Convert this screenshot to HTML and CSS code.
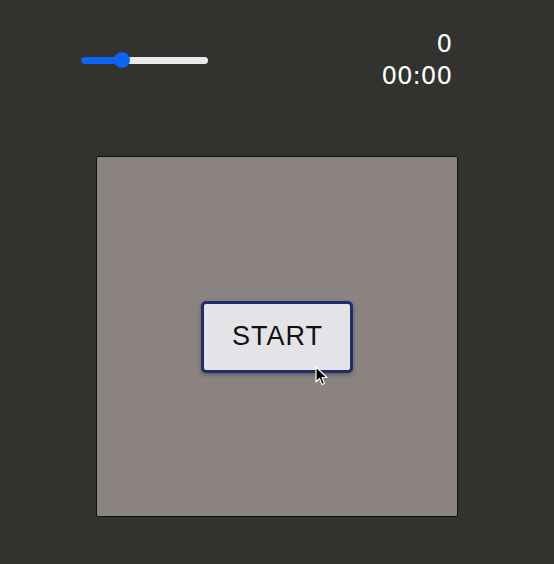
FILE: index.html
```html
<!DOCTYPE html>
<html>
<head>
<meta charset="utf-8">
<link rel="stylesheet" href="styles.css">
</head>
<body>
<div class="page">
  <header class="top">
    <div class="slider">
      <div class="fill"></div>
      <div class="thumb"></div>
      <div class="rest"></div>
    </div>
    <div class="stats">
      <div class="score">0</div>
      <div class="time">00:00</div>
    </div>
  </header>
  <main class="board">
    <button class="start">START</button>
    <svg class="cursor" width="13" height="20" viewBox="0 0 13 20">
      <path d="M1 1 L1 16 L4.5 12.5 L7 18.5 L9.5 17.5 L7 11.5 L12 11.5 Z" fill="#000" stroke="#fff" stroke-width="1.2" stroke-linejoin="round"/>
    </svg>
  </main>
</div>
</body>
</html>
```
FILE: styles.css
```css
html, body {
  margin: 0;
  padding: 0;
  background: #32332e;
}
.page {
  width: 554px;
  height: 564px;
  display: flex;
  flex-direction: column;
  align-items: center;
  font-family: "DejaVu Sans", sans-serif;
}
.top {
  align-self: flex-start;
  margin-left: 81px;
  width: 371px;
  height: 156px;
  display: flex;
  justify-content: space-between;
  align-items: flex-start;
  box-sizing: border-box;
  padding-top: 28px;
}
.slider {
  margin-top: 24px;
  width: 127px;
  height: 16px;
  display: flex;
  align-items: center;
}
.fill {
  width: 37px;
  height: 7px;
  background: #0d63f4;
  border-radius: 4px 0 0 4px;
}
.thumb {
  width: 16px;
  height: 16px;
  border-radius: 50%;
  background: #0d63f4;
  margin: 0 -4px;
  position: relative;
  z-index: 1;
  flex: none;
}
.rest {
  flex: 1;
  height: 7px;
  background: #e9e9e9;
  border-radius: 0 4px 4px 0;
}
.stats {
  color: #ffffff;
  text-align: right;
  font-size: 24.5px;
  line-height: 32px;
}
.board {
  position: relative;
  width: 362px;
  height: 361px;
  box-sizing: border-box;
  border: 1px solid #111;
  border-radius: 2px;
  background: #8a8382;
  display: flex;
  align-items: center;
  justify-content: center;
}
.start {
  width: 152px;
  height: 72px;
  box-sizing: border-box;
  border: 3px solid #1f2d6e;
  border-radius: 5px;
  background: #e4e4e8;
  color: #111;
  font-family: "Liberation Sans", Arial, sans-serif;
  font-size: 27px;
  letter-spacing: 1px;
  box-shadow: 0 2px 4px rgba(0,0,0,0.3);
  padding: 0 0 0 1px;
}
.cursor {
  position: absolute;
  left: 218px;
  top: 209px;
}
```
